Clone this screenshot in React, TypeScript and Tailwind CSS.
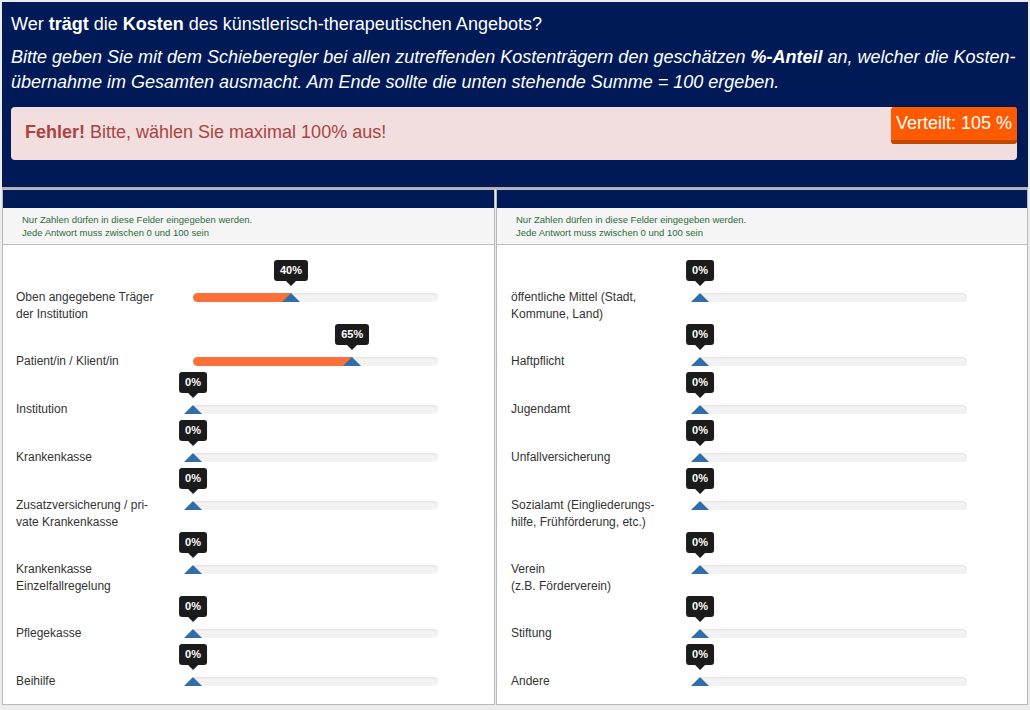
import React from "react";

type Row = { lines: string[]; value: number };

const leftRows: Row[] = [
  { lines: ["Oben angegebene Träger", "der Institution"], value: 40 },
  { lines: ["Patient/in / Klient/in"], value: 65 },
  { lines: ["Institution"], value: 0 },
  { lines: ["Krankenkasse"], value: 0 },
  { lines: ["Zusatzversicherung / pri-", "vate Krankenkasse"], value: 0 },
  { lines: ["Krankenkasse", "Einzelfallregelung"], value: 0 },
  { lines: ["Pflegekasse"], value: 0 },
  { lines: ["Beihilfe"], value: 0 },
];

const rightRows: Row[] = [
  { lines: ["öffentliche Mittel (Stadt,", "Kommune, Land)"], value: 0 },
  { lines: ["Haftpflicht"], value: 0 },
  { lines: ["Jugendamt"], value: 0 },
  { lines: ["Unfallversicherung"], value: 0 },
  { lines: ["Sozialamt (Eingliederungs-", "hilfe, Frühförderung, etc.)"], value: 0 },
  { lines: ["Verein", "(z.B. Förderverein)"], value: 0 },
  { lines: ["Stiftung"], value: 0 },
  { lines: ["Andere"], value: 0 },
];

function Slider({ value, trackW }: { value: number; trackW: number }) {
  const pos = (value / 100) * trackW;
  return (
    <div className="relative h-[16px]" style={{ width: trackW }}>
      <div className="absolute left-0 right-0 top-[4px] h-[9px] rounded-full bg-[#f3f3f3] shadow-[inset_0_1px_2px_rgba(0,0,0,0.08)] overflow-hidden">
        <div className="h-full bg-[#fc7139]" style={{ width: pos }} />
      </div>
      <div
        className="absolute top-[4px] w-0 h-0 border-l-[9px] border-r-[9px] border-b-[9px] border-l-transparent border-r-transparent border-b-[#2f6ea9] -translate-x-1/2"
        style={{ left: pos }}
      />
      <div
        className="absolute top-[-29px] -translate-x-1/2 flex flex-col items-center"
        style={{ left: pos }}
      >
        <div className="h-[21px] px-[6px] rounded-[3px] bg-[#1b1b1b] text-white text-[11px] font-bold leading-[21px] whitespace-nowrap">
          {value}%
        </div>
        <div className="w-0 h-0 border-l-[5px] border-r-[5px] border-t-[5px] border-l-transparent border-r-transparent border-t-[#1b1b1b]" />
      </div>
    </div>
  );
}

function Panel({
  rows,
  labelW,
  trackW,
  padL,
  className,
}: {
  rows: Row[];
  labelW: number;
  trackW: number;
  padL: number;
  className: string;
}) {
  return (
    <div className={"flex flex-col border border-[#b9b9b9] bg-white " + className}>
      <div className="h-[18px] bg-[#001a57]" />
      <div className="h-[37px] bg-[#f5f5f5] border-b border-[#bdbdbd] pl-[19px] pt-[5px] text-[9.5px] leading-[13px] text-[#2c6b3a]">
        <div>Nur Zahlen dürfen in diese Felder eingegeben werden.</div>
        <div>Jede Antwort muss zwischen 0 und 100 sein</div>
      </div>
      <div className="flex-1 pt-[12px]" style={{ paddingLeft: padL }}>
        {rows.map((r, i) => (
          <div key={i} className="flex items-start pt-[32px]">
            <div
              className="text-[12px] leading-[16px] text-[#333333]"
              style={{ width: labelW }}
            >
              {r.lines.map((l, j) => (
                <div key={j} className={j > 0 ? "mt-[1px] -mb-[1px]" : ""}>
                  {l}
                </div>
              ))}
            </div>
            <Slider value={r.value} trackW={trackW} />
          </div>
        ))}
      </div>
    </div>
  );
}

export default function App() {
  return (
    <div
      className="w-[1030px] h-[710px] bg-[#ececec] pt-[2px] pl-[2px] pr-[2px] flex flex-col overflow-hidden"
      style={{ fontFamily: '"Liberation Sans", Arial, sans-serif' }}
    >
      <div className="bg-[#001a57] border-b-[2px] border-[#b4b4b4] pl-[9px] pr-[11px] pt-[11px] pb-[27px] text-white">
        <div className="text-[18px] leading-[22px]">
          Wer <b>trägt</b> die <b>Kosten</b> des künstlerisch-therapeutischen Angebots?
        </div>
        <div className="mt-[10px] italic text-[18px] leading-[25px] whitespace-nowrap">
          Bitte geben Sie mit dem Schieberegler bei allen zutreffenden Kostenträgern den geschätzen{" "}
          <b>%-Anteil</b> an, welcher die Kosten-
          <br />
          übernahme im Gesamten ausmacht. Am Ende sollte die unten stehende Summe = 100 ergeben.
        </div>
        <div className="mt-[12px] h-[53px] rounded-[4px] bg-[#f2dede] flex items-start justify-between pl-[14px]">
          <div className="pt-[14px] text-[18px] leading-[22px] text-[#a94442]">
            <b>Fehler!</b> Bitte, wählen Sie maximal 100% aus!
          </div>
          <div className="h-[37px] px-[5px] rounded-[3px] bg-[#ff5a00] border-b-[4px] border-[#c24700] text-white text-[18px] leading-[33px] whitespace-nowrap">
            Verteilt: 105 %
          </div>
        </div>
      </div>
      <div className="flex-1 flex gap-[1px] pb-[5px]">
        <Panel rows={leftRows} labelW={177} trackW={245} padL={13} className="w-[493px]" />
        <Panel rows={rightRows} labelW={189} trackW={267} padL={14} className="flex-1" />
      </div>
    </div>
  );
}
